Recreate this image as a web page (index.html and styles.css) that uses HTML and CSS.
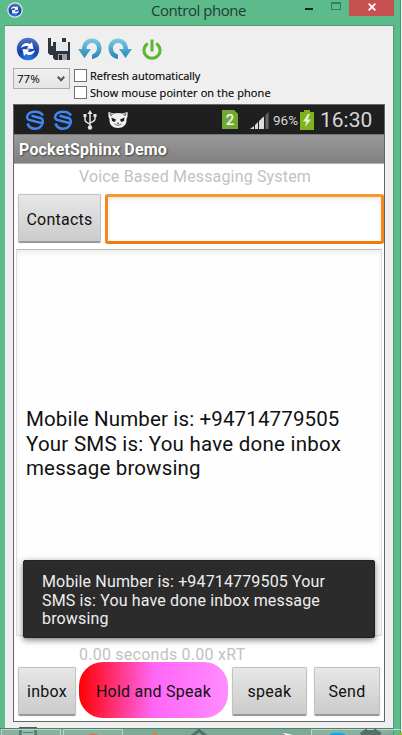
FILE: index.html
```html
<!DOCTYPE html>
<html lang="en">
<head>
<meta charset="utf-8">
<title>Control phone</title>
<link rel="stylesheet" href="styles.css">
</head>
<body>
<svg width="0" height="0" class="defs" aria-hidden="true">
  <defs>
    <radialGradient id="orb" cx=".5" cy=".9" r=".9"><stop offset="0" stop-color="#2f7bf0"/><stop offset=".5" stop-color="#153fa8"/><stop offset="1" stop-color="#5777c4"/></radialGradient>
    <linearGradient id="blue" x1="0" y1="0" x2="0" y2="1"><stop offset="0" stop-color="#7ccbe6"/><stop offset="1" stop-color="#2484b8"/></linearGradient>
    <symbol id="sync" viewBox="0 0 24 24">
      <circle cx="12" cy="12" r="11.2" fill="url(#orb)"/>
      <path d="M5 11c1-5 6-6 9-4l2-2 1.500 7-7-.5 2-2c-3-1-5 0-7.500 1.500z" fill="#fff"/>
      <path d="M19 13c-1 5-6 6-9 4l-2 2-1.500-7 7 .5-2 2c3 1 5 0 7.500-1.500z" fill="#fff"/>
    </symbol>
    <symbol id="turn" viewBox="0 0 24 22">
      <path d="M0 11h4C4.500 4 8.500.5 14 .5c6 0 9.500 4.500 9.500 9.500 0 6-3.500 10-9.500 11v-4.500c3-.8 5-3 5-6.200C19 7 17 5 14 5c-3.500 0-5.200 2.500-5.500 6H13l-6.500 9z" fill="url(#blue)"/>
    </symbol>
    <symbol id="ess" viewBox="0 0 20 20">
      <path d="M18 5.500C15 .5 5 .5 2.500 5.500 1.500 8 2.500 9.800 5.500 10.300L17.500 13.300C15 20.500 5 20.500 2.500 13.500M6.500 5.800L16 8.200Q18.500 9.500 17.500 13.300" fill="none" stroke="#3f87f5" stroke-width="2.500"/>
    </symbol>
  </defs>
</svg>
<div class="window">
  <header class="titlebar">
    <svg class="app-icon" viewBox="0 0 16 16"><circle cx="8" cy="8" r="7.800" fill="#dce5ef"/><use href="#sync" x="1" y="1" width="14" height="14"/></svg>
    <h1 class="title">Control phone</h1>
    <div class="controls"><span class="min"></span><span class="max"></span><span class="close"><svg width="8" height="8" viewBox="0 0 8 8"><path d="M.7.7l6.600 6.600M7.300.7L.7 7.300" stroke="#fff" stroke-width="1.800"/></svg></span></div>
  </header>
  <main class="client">
    <div class="toolbar">
      <svg width="24" height="24"><use href="#sync"/></svg>
      <svg class="save" width="24" height="24" viewBox="0 0 24 24"><path d="M1 1h18v17H3l-2-2z" fill="#30343c"/><path d="M4 1h11v8H4z" fill="#eef1f4"/><path d="M6 5h17v18H8l-2-2z" fill="#30343c"/><path d="M9 5h12v9H9z" fill="#e4e7ed"/><path d="M11 17h9v6h-9z" fill="#9ba1ab"/><path d="M12 18h3v5h-3z" fill="#23262c"/></svg>
      <svg class="undo" width="24" height="22"><use href="#turn"/></svg>
      <svg class="redo" width="24" height="22"><use href="#turn"/></svg>
      <svg class="power" width="20" height="22" viewBox="0 0 20 22"><path d="M5.800 4.500A8 8 0 1 0 14.200 4.500M10 .5v12" fill="none" stroke="#58b72a" stroke-width="3"/></svg>
    </div>
    <div class="options">
      <div class="select">77%<svg width="8" height="6" viewBox="0 0 8 6"><path d="M.8.8L4 4.200 7.200.8" fill="none" stroke="#555" stroke-width="2"/></svg></div>
      <div class="checks">
        <div class="check"><i></i><span class="refresh">Refresh automatically</span></div>
        <div class="check"><i></i><span class="pointer">Show mouse pointer on the phone</span></div>
      </div>
    </div>
    <section class="phone">
      <div class="status">
        <svg class="s1" width="20" height="20"><use href="#ess"/></svg>
        <svg class="s2" width="20" height="20"><use href="#ess"/></svg>
        <svg class="usb" width="14" height="20" viewBox="0 0 14 20"><g fill="none" stroke="#e5e5e5" stroke-width="1.500"><path d="M7 3v14M2 6v4q0 2 5 4M12 6v3q0 2-5 4"/></g><path d="M7 0l2.500 4h-5zM.5 4h3v3h-3zM10.500 4h3v3h-3z" fill="#e5e5e5"/><circle cx="7" cy="17.500" r="2.200" fill="#e5e5e5"/></svg>
        <svg class="cat" width="20" height="18" viewBox="0 0 20 18"><path d="M.5 1l5 1.500q4.500-1 9 0l5-1.500q.5 5-1 7c.5 6-3.500 9-8.500 9S1 14 1.500 8Q0 6 .5 1z" fill="#f1f1f1"/><path d="M3.500 6.500l4.500 2-1 2.500-3-1zM16.500 6.500L12 8.500l1 2.500 3-1z" fill="#1f1f1f"/><path d="M2 2.500l2.500 1-1.500 1.500zM18 2.500l-2.500 1 1.500 1.500zM9 12h2l-1 1zM6.500 13q3.500 3 7 0" fill="none" stroke="#555" stroke-width=".8"/></svg>
        <span class="sim">2</span>
        <svg class="signal" width="19" height="18" viewBox="0 0 19 18"><path d="M0 17l4-3v3zM5 13l3-3v7H5zM9 9l4-3.500V17H9z" fill="#ddd"/><path d="M11 7l3-2.500V17h-3z" fill="#ddd"/><path d="M15.500 3L18.500 0v17h-3z" fill="#666"/></svg>
        <span class="percent">96%</span>
        <svg class="battery" width="14" height="20" viewBox="0 0 14 20"><path d="M4 0h6v2h4v18H0V2h4z" fill="#7db41c"/><path d="M8 4L3 11.500h3.500L5 17l6-7.500H7.500L10 4z" fill="#e8f0dc"/></svg>
        <time class="time">16:30</time>
      </div>
      <div class="appbar"><span>PocketSphinx Demo</span></div>
      <p class="caption top"><span>Voice Based Messaging System</span></p>
      <div class="row contacts-row"><button class="btn contacts"><span>Contacts</span></button><div class="field"></div></div>
      <div class="output"><p><span class="l1">Mobile Number is: +94714779505</span><br><span class="l2">Your SMS is: You have done inbox</span><br><span class="l3">message browsing</span></p></div>
      <p class="caption bottom"><span>0.00 seconds 0.00 xRT</span></p>
      <div class="row actions"><button class="btn inbox"><span>inbox</span></button><button class="hold"><span>Hold and Speak</span></button><button class="btn speak"><span>speak</span></button><button class="btn send"><span>Send</span></button></div>
      <div class="toast"><span>Mobile Number is: +94714779505 Your</span><br><span>SMS is: You have done inbox message</span><br><span>browsing</span></div>
    </section>
  </main>
  <div class="taskbar">
    <svg width="402" height="10" viewBox="0 0 402 10">
      <path d="M0 2h393v8H0z" fill="#7fa997"/>
      <path d="M19 1h18v2H19z" fill="#555f59"/><path d="M19 3h18v7H19z" fill="#567066"/><path d="M22 4h12v6H22z" fill="#8db6a4"/><path d="M23 6h10v1H23z" fill="#567066"/>
      <path d="M1.500 10V3.500h59V10M63.500 10V3.500h59V10M311.500 10V3.500h62V10M374.500 10V3.500H402" fill="#ffffff16" stroke="#b9d6c9"/>
      <path d="M0 2.500h393" stroke="#4f8069"/>
      <path d="M85 10q8-4 16 0z" fill="#e7674e"/><path d="M153 7.500h4V10h-4z" fill="#f27a13"/>
      <path d="M192 10l7-5.500 7 5.500" fill="none" stroke="#567066" stroke-width="3"/>
      <path d="M282 10l2-3 9 2v1z" fill="#fff"/><path d="M282 10l2-2 3 2z" fill="#704080"/>
      <path d="M328 10q3-4 9-3 6-1 10 3z" fill="#13a6e8"/>
      <path d="M360 7l7-5v2h7V2l8 5-3 3h-17z" fill="#567066"/>
      <path d="M398 9l4-3v4h-4z" fill="#a2b82c"/>
    </svg>
  </div>
</div>
</body>
</html>
```
FILE: styles.css
```css
* { box-sizing: border-box; }
body { margin: 0; width: 402px; height: 735px; overflow: hidden; background: #f3f6f4; font-family: Roboto, "Liberation Sans", sans-serif; }
.defs { position: absolute; }
svg { display: block; flex: none; }
p, h1 { margin: 0; font-weight: 400; }
span { white-space: nowrap; }
.window { position: relative; width: 401px; height: 735px; background: #5bbb8b; border-right: 1px solid #459a70; display: flex; flex-direction: column; }
.titlebar { height: 25px; display: flex; align-items: flex-start; flex: none; }
.app-icon { width: 16px; height: 16px; margin: 2px 0 0 7px; }
.title { margin-left: 128px; width: 96px; font: 15px/21px "Open Sans", sans-serif; color: #263c32; white-space: nowrap; letter-spacing: -.45px; }
.controls { display: flex; margin-left: 58px; }
.min { width: 8px; height: 2px; margin-top: 8px; background: #222; }
.max { width: 10px; height: 8px; margin: 2px 0 0 18px; border: 1px solid #3d7d5e; border-top-width: 2px; }
.close { width: 45px; height: 16px; margin-left: 8px; background: #c75050; display: flex; justify-content: center; padding-top: 3px; }
.client { width: 389px; flex: 1; margin-left: 5px; background: #efefef; border-top: 1px solid #4a9d73; border-right: 1px solid #4a9d73; padding-left: 8px; }
.toolbar { display: flex; height: 42px; padding-top: 11px; padding-left: 3px; align-items: flex-start; }
.save { margin-left: 7px; }
.undo { margin: 1px 0 0 7px; }
.redo { margin: 1px 0 0 6px; transform: scaleX(-1); }
.power { margin: 2px 0 0 10px; }
.options { display: flex; height: 36px; color: #000; }
.select { width: 57px; height: 21px; border: 1px solid #acacac; background: linear-gradient(#f0f0f0, #e5e5e5); display: flex; align-items: center; justify-content: space-between; padding: 0 4px 0 3px; font: 11.500px "Open Sans", sans-serif; }
.checks { margin-left: 4px; padding-top: 1px; }
.check { display: flex; height: 17px; align-items: flex-start; font: 11px/14px "Open Sans", sans-serif; -webkit-text-stroke: .15px #000; }
.refresh { letter-spacing: -.04px; }
.pointer { letter-spacing: .09px; }
.check i { width: 13px; height: 13px; background: #fff; border: 1px solid #707070; margin-right: 3px; }
.phone { position: relative; width: 372px; height: 618px; background: #fff; border: 1px solid #666; display: flex; flex-direction: column; }
.status { height: 29px; flex: none; background: #1f1f1f; display: flex; align-items: flex-start; padding: 5px 0 0 11px; color: #d6d6d6; }
.s2 { margin-left: 8px; }
.usb { margin-left: 10px; }
.cat { margin: 1px 0 0 11px; }
.sim { width: 16px; height: 19px; margin-left: 94px; background: #72a832; clip-path: polygon(0 0, 75% 0, 100% 20%, 100% 100%, 0 100%); color: #f0f0f0; text-align: center; font: 500 15px/20px Roboto; }
.signal { margin: 2px 0 0 12px; }
.percent { margin-left: 4px; width: 27px; font-size: 13.500px; line-height: 20px; }
.battery { margin-left: 0; }
.time { margin-left: 6px; font-size: 21px; line-height: 20px; white-space: nowrap; }
.appbar { height: 30px; flex: none; background: linear-gradient(#999, #808080); border-top: 1px solid #777; border-bottom: 1px solid #b0b0b0; padding-left: 5px; font: 700 16px/30px Roboto; letter-spacing: .17px; color: #fff; text-shadow: 1px 1px 2px #444; }
.caption { padding-left: 65px; color: #c2c2c2; font-size: 16px; }
.top { height: 30px; line-height: 25px; flex: none; letter-spacing: .16px; }
.row { display: flex; flex: none; }
.contacts-row { height: 50px; padding-left: 4px; }
button { border: 0; margin: 0; padding: 2px 0 0; font: 16px Roboto, sans-serif; letter-spacing: .25px; color: #111; }
.btn { height: 49px; border: 1px solid #c2c2c2; border-bottom: 2px solid #999; border-radius: 2px; background: linear-gradient(#e7e7e7, #cbcbcb); box-shadow: 0 0 1px #bbb; }
.contacts { width: 83px; }
.field { width: 279px; height: 50px; margin-left: 4px; border: 3px solid #f68b18; border-color: #fb9827 #f68718 #f27b0c; border-radius: 3px; box-shadow: inset 0 2px 4px #e6e6e6; }
.output { flex: none; width: 366px; height: 387px; margin: 5px 0 0 2px; border: 1px solid #ddd; border-top-color: #bbb; background: #fefefe; box-shadow: inset 0 3px 5px #eee; display: flex; align-items: center; padding: 3px 0 0 9px; font-size: 20.500px; line-height: 24.600px; color: #111; }
.l1, .l3 { letter-spacing: .14px; }
.l2 { letter-spacing: .24px; }
.bottom { height: 26px; line-height: 37px; flex: none; letter-spacing: .24px; }
.actions { padding-left: 4px; align-items: center; height: 56px; }
.actions .btn { margin-top: 2px; }
.inbox { width: 58px; }
.hold { width: 149px; height: 56px; margin-left: 3px; border-radius: 24px; background: linear-gradient(90deg, #f00, #ff66f5 50%, #ff8cff); }
.speak { width: 75px; margin-left: 4px; }
.send { width: 66px; margin-left: 7px; }
.toast { position: absolute; left: 9px; top: 455px; width: 352px; height: 78px; background: #2b2b2b; border: 1px solid #222; border-radius: 2px; box-shadow: 0 2px 6px #0008; padding: 12px 0 0 18px; color: #eee; font-size: 16px; line-height: 18.700px; letter-spacing: .15px; }
.taskbar { position: absolute; left: 0; top: 726px; }
```
